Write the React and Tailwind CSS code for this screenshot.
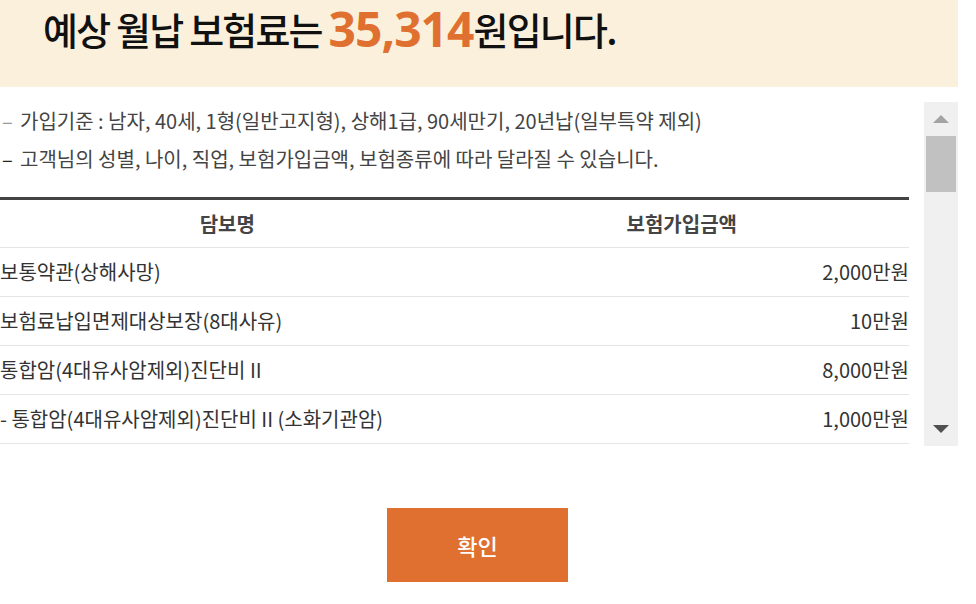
import React from "react";

const rows = [
	{ name: "보통약관(상해사망)", amount: "2,000만원" },
	{ name: "보험료납입면제대상보장(8대사유)", amount: "10만원" },
	{ name: "통합암(4대유사암제외)진단비 II", amount: "8,000만원" },
	{ name: "- 통합암(4대유사암제외)진단비 II (소화기관암)", amount: "1,000만원" },
];

const kr = { fontFamily: '"Noto Sans CJK KR", "Noto Sans", sans-serif' };

export default function App() {
	return (
		<div className="w-[976px] h-[604px] bg-white overflow-hidden" style={kr}>
			<div className="w-[958px]">
				{/* premium summary */}
				<div className="h-[87px] bg-[#faf0dc] pl-[43px] pt-[1px]">
					<p className="text-[38px] leading-[56px] font-medium text-[#111] tracking-[-1.8px] whitespace-nowrap">
						예상 월납 보험료는{" "}
						<span
							className="inline-block text-[48px] leading-[66px] -my-[5px] font-bold text-[#e0702f] tracking-[-1px] align-top"
							style={{ fontFamily: '"Noto Sans", sans-serif' }}
						>
							35,314
						</span>
						원입니다.
					</p>
				</div>

				<div className="flex mt-[15px] h-[344px]">
					<div className="flex-1 overflow-hidden pr-[15px]">
						<ul className="text-[20px] text-[#444]">
							<li className="h-[38px] flex items-center whitespace-nowrap">
								<span className="w-[20px] pl-[2px] text-[#999]">–</span>
								가입기준 : 남자, 40세, 1형(일반고지형), 상해1급, 90세만기, 20년납(일부특약 제외)
							</li>
							<li className="h-[38px] flex items-center whitespace-nowrap">
								<span className="w-[20px] pl-[2px] text-[#222]">–</span>
								고객님의 성별, 나이, 직업, 보험가입금액, 보험종류에 따라 달라질 수 있습니다.
							</li>
						</ul>

						<table className="w-full mt-[19px] border-t-[3px] border-[#444] text-[20px] text-[#333]">
							<thead>
								<tr className="h-[49px] border-b border-[#e5e5e5]">
									<th className="w-1/2 font-bold text-center text-[#444]">담보명</th>
									<th className="w-1/2 font-bold text-center text-[#444]">보험가입금액</th>
								</tr>
							</thead>
							<tbody>
								{rows.map((r) => (
									<tr key={r.name} className="h-[49px] border-b border-[#e5e5e5]">
										<td className="text-left whitespace-nowrap">{r.name}</td>
										<td className="text-right whitespace-nowrap">{r.amount}</td>
									</tr>
								))}
							</tbody>
						</table>
					</div>

					{/* scrollbar */}
					<div className="w-[34px] bg-[#f0f0f0] flex flex-col items-center">
						<div className="h-[34px] flex items-center justify-center">
							<div className="w-0 h-0 border-x-[8px] border-x-transparent border-b-[8px] border-b-[#a3a3a3]" />
						</div>
						<div className="w-[30px] h-[56px] bg-[#c1c1c1]" />
						<div className="flex-1" />
						<div className="h-[34px] flex items-center justify-center">
							<div className="w-0 h-0 border-x-[8px] border-x-transparent border-t-[8px] border-t-[#505050]" />
						</div>
					</div>
				</div>

				<div className="flex justify-center pr-[3px] mt-[62px]">
					<button className="w-[181px] h-[74px] bg-[#e0702f] text-white text-[22px] font-medium">
						확인
					</button>
				</div>
			</div>
		</div>
	);
}
